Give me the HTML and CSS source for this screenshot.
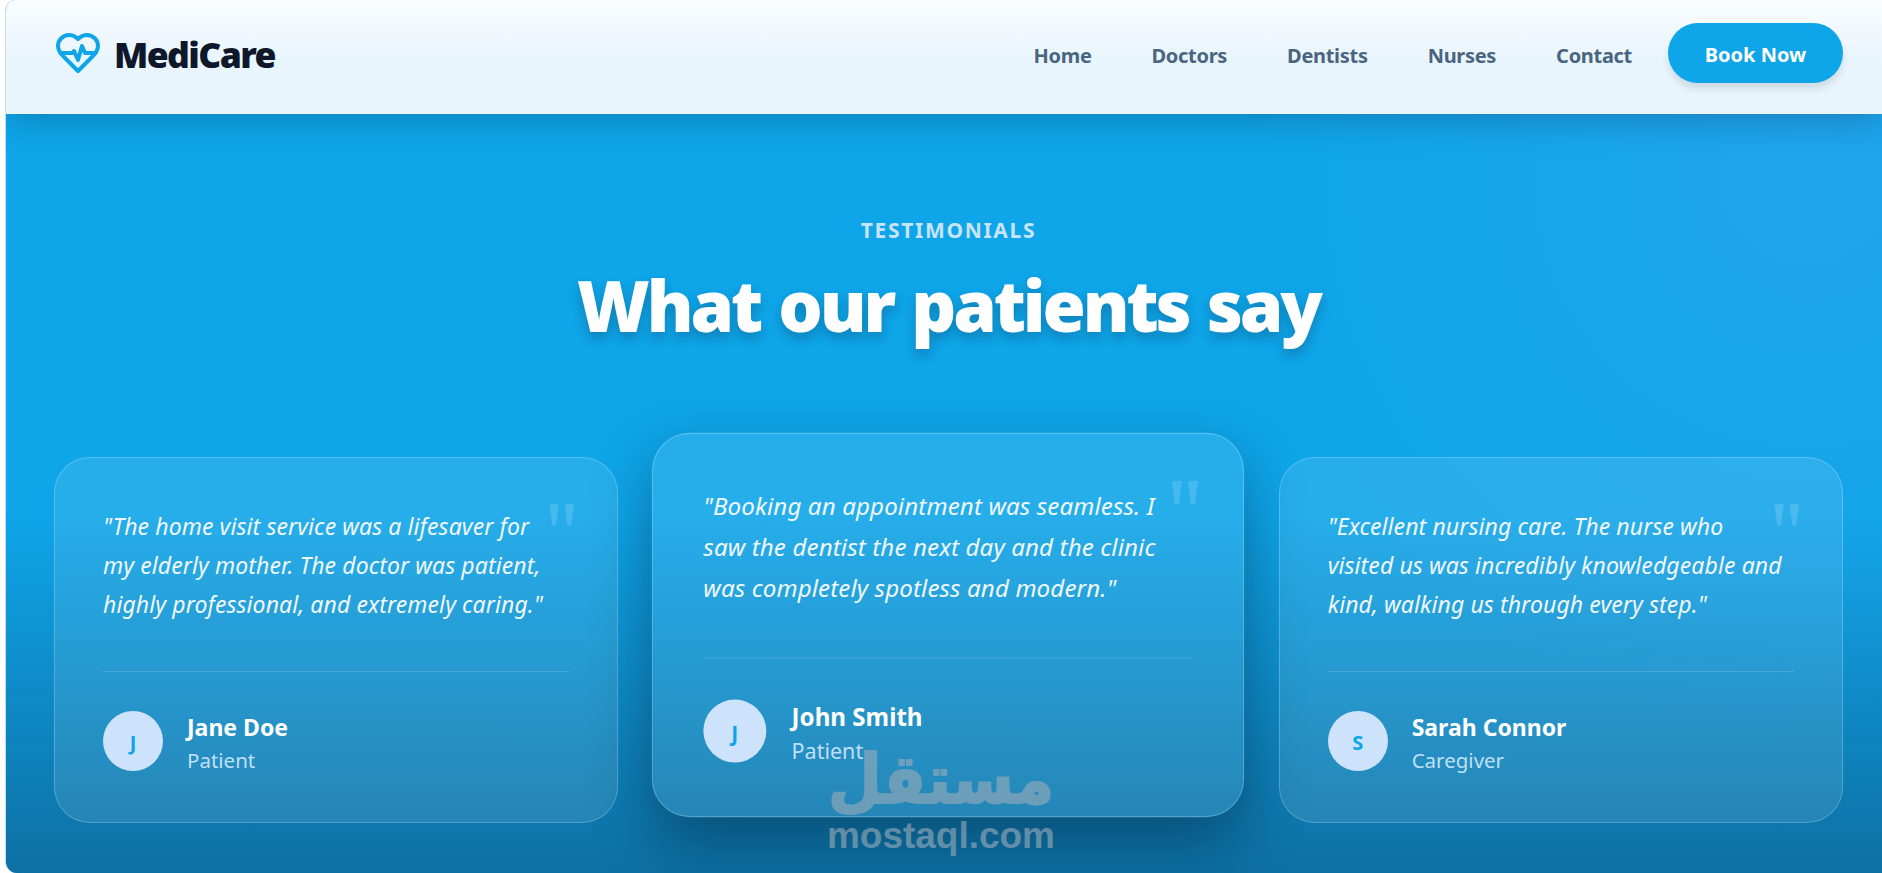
FILE: index.html
```
<!DOCTYPE html>
<html lang="en">
<head>
<meta charset="UTF-8">
<title>MediCare</title>
<link rel="stylesheet" href="styles.css">
</head>
<body>
<div class="page">
  <header class="header">
    <a class="logo" href="#">
      <svg class="logo-icon" viewBox="0 0 24 24" fill="none" stroke="currentColor" stroke-width="2" stroke-linecap="round" stroke-linejoin="round">
        <path d="M19 14c1.49-1.46 3-3.21 3-5.5A5.5 5.5 0 0 0 16.5 3c-1.76 0-3 .5-4.5 2-1.5-1.5-2.74-2-4.5-2A5.5 5.5 0 0 0 2 8.5c0 2.3 1.5 4.05 3 5.5l7 7Z"/>
        <path d="M3.22 12H9.5l.5-1 2 4.5 2-7 1.5 3.5h5.27"/>
      </svg>
      <span class="logo-text">MediCare</span>
    </a>
    <nav class="nav">
      <a href="#">Home</a>
      <a href="#">Doctors</a>
      <a href="#">Dentists</a>
      <a href="#">Nurses</a>
      <a href="#">Contact</a>
    </nav>
    <a class="btn" href="#">Book Now</a>
  </header>

  <section class="testimonials">
    <p class="subtitle">TESTIMONIALS</p>
    <h2 class="title">What our patients say</h2>
    <div class="cards">
      <div class="card">
        <p class="quote">"The home visit service was a lifesaver for<br>my elderly mother. The doctor was patient,<br>highly professional, and extremely caring."</p>
        <div class="author">
          <div class="avatar">J</div>
          <div>
            <div class="name">Jane Doe</div>
            <div class="role">Patient</div>
          </div>
        </div>
      </div>
      <div class="card card-featured">
        <p class="quote">"Booking an appointment was seamless. I<br>saw the dentist the next day and the clinic<br>was completely spotless and modern."</p>
        <div class="author">
          <div class="avatar">J</div>
          <div>
            <div class="name">John Smith</div>
            <div class="role">Patient</div>
          </div>
        </div>
      </div>
      <div class="card">
        <p class="quote">"Excellent nursing care. The nurse who<br>visited us was incredibly knowledgeable and<br>kind, walking us through every step."</p>
        <div class="author">
          <div class="avatar">S</div>
          <div>
            <div class="name">Sarah Connor</div>
            <div class="role">Caregiver</div>
          </div>
        </div>
      </div>
    </div>
  </section>
</div>

<svg class="watermark" width="240" height="140" viewBox="0 -20 240 140">
  <text class="wm-ar" x="120" y="53" transform="scale(1 1.1)" text-anchor="middle" textLength="226" lengthAdjust="spacingAndGlyphs">مستقل</text>
  <text class="wm-en" x="120" y="103" text-anchor="middle" textLength="228" lengthAdjust="spacingAndGlyphs">mostaql.com</text>
</svg>
</body>
</html>
```
FILE: styles.css
```
* {
  box-sizing: border-box;
  margin: 0;
  padding: 0;
}
body {
  height: 873px;
  overflow: hidden;
  background: #fff;
  font-family: "Noto Sans", "Open Sans", sans-serif;
}
a {
  text-decoration: none;
  color: inherit;
}
.page {
  height: 873px;
  margin-left: 5px;
  border-left: 1px solid #c9dcea;
  border-radius: 10px 0 0 12px;
  overflow: hidden;
  background: #0ea5e9;
}

/* Header */
.header {
  position: relative;
  z-index: 2;
  display: flex;
  align-items: flex-start;
  height: 114px;
  padding: 23px 39px 0 48px;
  background: linear-gradient(#fafdff 0, #f2f9fe 28px, #e8f5fc 62px);
  border-bottom: 1px solid #f0f7fb;
  box-shadow: 0 10px 30px -4px rgba(15, 23, 42, 0.25);
}
.logo {
  display: flex;
  align-items: center;
  height: 60px;
  margin-right: auto;
}
.logo-icon {
  width: 48px;
  height: 48px;
  color: #0ea5e9;
}
.logo-text {
  margin-left: 12px;
  padding-top: 2px;
  font-size: 35.5px;
  font-weight: 900;
  letter-spacing: -1.6px;
  color: #0f172a;
}
.nav {
  display: flex;
  gap: 60px;
  margin-right: 36px;
  padding-top: 5px;
  line-height: 56px;
  font-size: 20px;
  font-weight: 700;
  letter-spacing: -0.3px;
  color: #4a6580;
}
.btn {
  width: 175px;
  height: 60px;
  padding-top: 3px;
  line-height: 58px;
  border-radius: 30px;
  background: #0ea5e9;
  color: #fff;
  font-size: 20px;
  font-weight: 700;
  text-align: center;
  box-shadow: 0 6px 7px rgba(15, 23, 42, 0.11);
}

/* Testimonials */
.testimonials {
  height: 759px;
  padding: 101px 39px 0 48px;
  background:
    radial-gradient(circle at 96% 8%, rgba(56, 164, 244, 0.4) 0, rgba(56, 164, 244, 0) 560px),
    linear-gradient(#0ea5e9 0, #0ea5e9 400px, #0d6da0 780px);
}
.subtitle {
  line-height: 30px;
  font-size: 21px;
  font-weight: 700;
  letter-spacing: 1.7px;
  text-align: center;
  color: #c9e3fb;
}
.title {
  margin-top: 18px;
  line-height: 84px;
  font-size: 70px;
  font-weight: 900;
  letter-spacing: -3.1px;
  word-spacing: 3px;
  text-align: center;
  color: #fff;
  text-shadow: 0 6px 12px rgba(15, 23, 42, 0.26);
}
.cards {
  display: grid;
  grid-template-columns: repeat(3, 1fr);
  gap: 48px;
  margin-top: 110px;
}
.card {
  position: relative;
  height: 366px;
  padding: 49px 48px 0;
  background: rgba(255, 255, 255, 0.1);
  border: 1px solid rgba(255, 255, 255, 0.22);
  border-radius: 36px;
}
.card::before {
  content: '"';
  position: absolute;
  top: 31px;
  right: 35px;
  line-height: 88px;
  font-family: "Liberation Serif", serif;
  font-size: 92px;
  font-weight: 700;
  color: rgba(255, 255, 255, 0.15);
  transform: scaleX(0.8);
  transform-origin: right;
}
.card-featured {
  transform: translateY(-15px) scale(1.05);
  box-shadow: 0 24px 56px rgba(0, 10, 25, 0.36);
}
.quote {
  line-height: 39px;
  font-size: 23px;
  font-style: italic;
  letter-spacing: 0.1px;
  white-space: nowrap;
  color: #f0f8fe;
}
.author {
  display: flex;
  align-items: center;
  gap: 24px;
  margin-top: 47px;
  padding-top: 36px;
  border-top: 1px solid rgba(255, 255, 255, 0.15);
}
.avatar {
  width: 60px;
  height: 60px;
  padding-top: 2px;
  line-height: 60px;
  border-radius: 50%;
  background: #cde3fb;
  color: #0ea5e9;
  font-size: 20px;
  font-weight: 700;
  text-align: center;
}
.name {
  padding-top: 1px;
  line-height: 37px;
  font-size: 23px;
  font-weight: 700;
  color: #fff;
}
.role {
  line-height: 28px;
  font-size: 20.5px;
  color: #bfe0f6;
}

/* Watermark over the page */
.watermark {
  position: absolute;
  left: 821px;
  top: 725px;
  opacity: 0.6;
  fill: #9cadb9;
}
.wm-ar {
  font: bold 62px "DejaVu Sans", sans-serif;
  stroke: #9cadb9;
  stroke-width: 2;
  stroke-linejoin: round;
}
.wm-en {
  font: bold 36.6px "Liberation Sans", Arial, sans-serif;
}
```
